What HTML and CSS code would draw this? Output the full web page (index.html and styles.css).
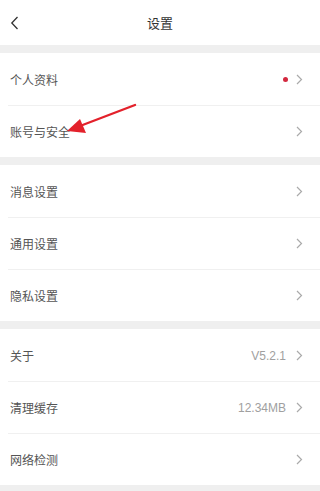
FILE: index.html
```html
<!DOCTYPE html>
<html lang="zh">
<head>
<meta charset="utf-8">
<link rel="stylesheet" href="styles.css">
</head>
<body>
<div class="page">
  <header class="topbar">
    <svg class="back" width="9" height="14" viewBox="0 0 9 14"><path d="M7.5 1 L1.8 7 L7.5 13" fill="none" stroke="#333" stroke-width="1.3"/></svg>
    <div class="title">设置</div>
  </header>
  <section class="group">
    <div class="row"><span class="label">个人资料</span><span class="right"><span class="dot"></span><svg class="chev" width="7" height="11" viewBox="0 0 7 11"><path d="M1 1 L5.5 5.5 L1 10" fill="none" stroke="#aaa" stroke-width="1.2"/></svg></span></div>
    <div class="row"><span class="label">账号与安全</span><span class="right"><svg class="chev" width="7" height="11" viewBox="0 0 7 11"><path d="M1 1 L5.5 5.5 L1 10" fill="none" stroke="#aaa" stroke-width="1.2"/></svg></span></div>
  </section>
  <section class="group">
    <div class="row"><span class="label">消息设置</span><span class="right"><svg class="chev" width="7" height="11" viewBox="0 0 7 11"><path d="M1 1 L5.5 5.5 L1 10" fill="none" stroke="#aaa" stroke-width="1.2"/></svg></span></div>
    <div class="row"><span class="label">通用设置</span><span class="right"><svg class="chev" width="7" height="11" viewBox="0 0 7 11"><path d="M1 1 L5.5 5.5 L1 10" fill="none" stroke="#aaa" stroke-width="1.2"/></svg></span></div>
    <div class="row"><span class="label">隐私设置</span><span class="right"><svg class="chev" width="7" height="11" viewBox="0 0 7 11"><path d="M1 1 L5.5 5.5 L1 10" fill="none" stroke="#aaa" stroke-width="1.2"/></svg></span></div>
  </section>
  <section class="group">
    <div class="row"><span class="label">关于</span><span class="right"><span class="value">V5.2.1</span><svg class="chev" width="7" height="11" viewBox="0 0 7 11"><path d="M1 1 L5.5 5.5 L1 10" fill="none" stroke="#aaa" stroke-width="1.2"/></svg></span></div>
    <div class="row"><span class="label">清理缓存</span><span class="right"><span class="value">12.34MB</span><svg class="chev" width="7" height="11" viewBox="0 0 7 11"><path d="M1 1 L5.5 5.5 L1 10" fill="none" stroke="#aaa" stroke-width="1.2"/></svg></span></div>
    <div class="row"><span class="label">网络检测</span><span class="right"><svg class="chev" width="7" height="11" viewBox="0 0 7 11"><path d="M1 1 L5.5 5.5 L1 10" fill="none" stroke="#aaa" stroke-width="1.2"/></svg></span></div>
  </section>
  <svg class="arrow" width="320" height="491" viewBox="0 0 320 491">
    <line x1="135" y1="105" x2="80" y2="126" stroke="#e3212b" stroke-width="2.4" stroke-linecap="round"/>
    <polygon points="67,131 80,119 86,133" fill="#e3212b"/>
  </svg>
</div>
</body>
</html>
```
FILE: styles.css
```css
* { box-sizing: border-box; margin: 0; padding: 0; }
html, body { width: 320px; height: 491px; overflow: hidden; }
body { background: #efefef; font-family: "Noto Sans CJK SC", "Liberation Sans", sans-serif; }
.page { position: relative; width: 320px; height: 491px; }
.topbar {
  height: 45px; background: #fff; position: relative;
  display: flex; align-items: center; justify-content: center;
}
.back { position: absolute; left: 10px; top: 16px; }
.title { font-size: 13px; color: #333; }
.group { background: #fff; margin-top: 8px; }
.row {
  height: 52px; display: flex; align-items: center; justify-content: space-between;
  padding: 1px 17px 0 10px; position: relative;
}
.row + .row::before {
  content: ""; position: absolute; left: 8px; right: 0; top: 0; height: 1px; background: #f0f0f0;
}
.label { font-size: 12px; color: #555; }
.right { display: flex; align-items: center; }
.value { font-size: 12px; color: #a0a0a0; margin-right: 10px; font-family: "Liberation Sans", "Noto Sans CJK SC", sans-serif; }
.dot { width: 5px; height: 5px; border-radius: 50%; background: #d3283f; margin-right: 8px; }
.chev { display: block; }
.arrow { position: absolute; left: 0; top: 0; pointer-events: none; }
```
